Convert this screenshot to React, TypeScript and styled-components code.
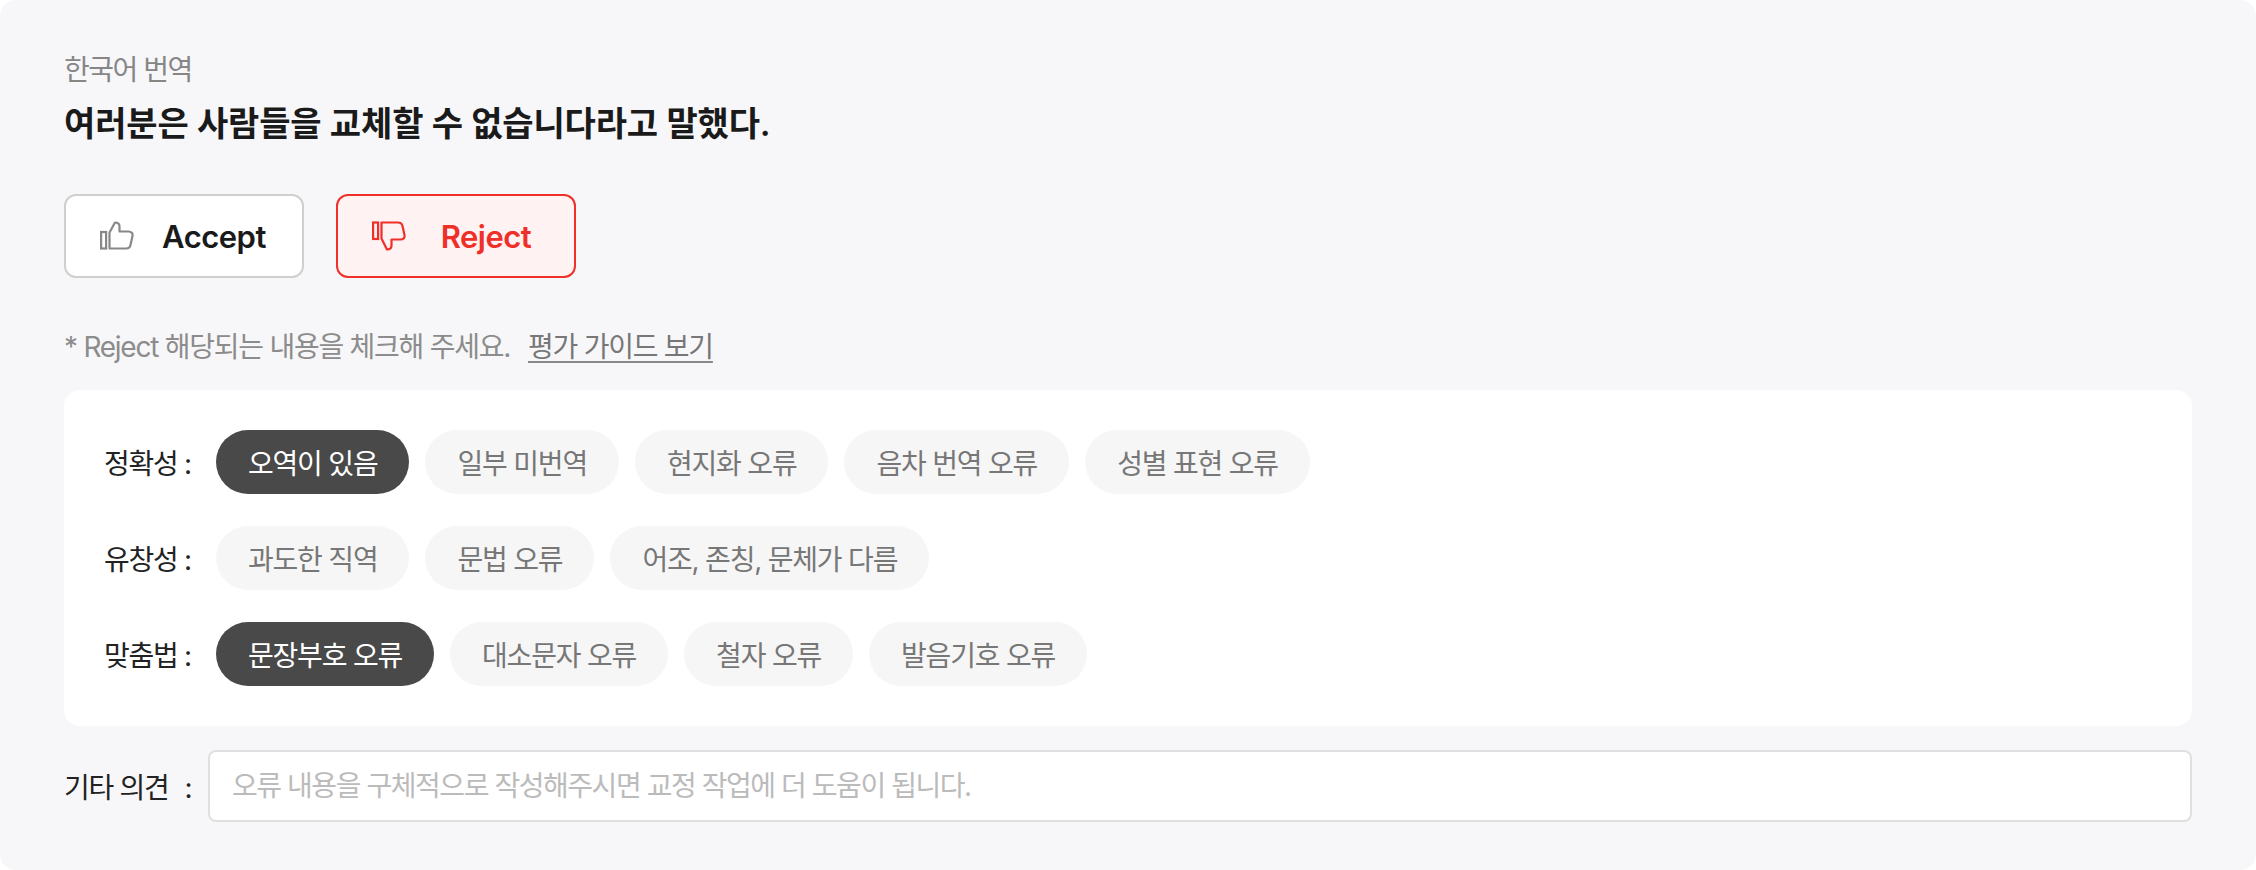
import React from 'react'
import styled, { createGlobalStyle } from 'styled-components'

const GlobalStyle = createGlobalStyle`
  * { box-sizing: border-box; }
  html, body { margin: 0; padding: 0; background: #fff; }
  body { font-family: Inter, "Noto Sans CJK KR", sans-serif; }
`

const groups = [
  {
    label: '정확성 :',
    items: [
      { text: '오역이 있음', active: true },
      { text: '일부 미번역' },
      { text: '현지화 오류' },
      { text: '음차 번역 오류' },
      { text: '성별 표현 오류' },
    ],
  },
  {
    label: '유창성 :',
    items: [
      { text: '과도한 직역' },
      { text: '문법 오류' },
      { text: '어조, 존칭, 문체가 다름' },
    ],
  },
  {
    label: '맞춤법 :',
    items: [
      { text: '문장부호 오류', active: true },
      { text: '대소문자 오류' },
      { text: '철자 오류' },
      { text: '발음기호 오류' },
    ],
  },
]

const ThumbUp = () => (
  <svg width="34" height="30" viewBox="0 0 34 30" fill="none" stroke="currentColor" strokeWidth="2.2">
    <rect x="1.100" y="11" width="5" height="16.500" />
    <path d="M9.500 27.500V11.500L15 1.500C18 1.500 19.500 3 19.500 5.500V10.500H28.500C31.500 10.500 33 12.500 32.500 15L30.500 24C30 26.500 28.500 27.500 26 27.500H9.500Z" strokeLinejoin="round" />
  </svg>
)

const ThumbDown = () => (
  <svg width="34" height="30" viewBox="0 0 34 30" fill="none" stroke="currentColor" strokeWidth="2.2">
    <rect x="1.100" y="1.500" width="5" height="16.500" />
    <path d="M9.500 1.500V17.500L15 28.500C18 28.500 19.500 27 19.500 24.500V18.500H28.500C31.500 18.500 33 16.500 32.500 14L30.500 5C30 2.500 28.500 1.500 26 1.500H9.500Z" strokeLinejoin="round" />
  </svg>
)

export default function App() {
  return (
    <>
      <GlobalStyle />
      <Panel>
        <Caption>한국어 번역</Caption>
        <Sentence>여러분은 사람들을 교체할 수 없습니다라고 말했다.</Sentence>
        <Actions>
          <ActionButton>
            <IconSlot><ThumbUp /></IconSlot>
            <ActionText>Accept</ActionText>
          </ActionButton>
          <ActionButton reject>
            <IconSlot reject><ThumbDown /></IconSlot>
            <ActionText>Reject</ActionText>
          </ActionButton>
        </Actions>
        <Hint>
          * Reject 해당되는 내용을 체크해 주세요.
          <GuideLink href="#">평가 가이드 보기</GuideLink>
        </Hint>
        <Card>
          {groups.map((group) => (
            <Row key={group.label}>
              <RowLabel>{group.label}</RowLabel>
              {group.items.map((item) => (
                <Pill key={item.text} active={item.active}>{item.text}</Pill>
              ))}
            </Row>
          ))}
        </Card>
        <OpinionRow>
          <OpinionLabel>기타 의견<Colon>:</Colon></OpinionLabel>
          <OpinionInput placeholder="오류 내용을 구체적으로 작성해주시면 교정 작업에 더 도움이 됩니다." />
        </OpinionRow>
      </Panel>
    </>
  )
}

const Panel = styled.div`
  height: 870px;
  padding: 48px 64px;
  background: #f7f7f9;
  border-radius: 16px;
`

const Caption = styled.div`
  height: 40px;
  margin-top: 2px;
  line-height: 40px;
  font-size: 28px;
  letter-spacing: -1.5px;
  color: #868686;
`

const Sentence = styled.div`
  margin-top: 10px;
  height: 48px;
  line-height: 48px;
  font-size: 34px;
  font-weight: 600;
  letter-spacing: -0.15px;
  color: #1a1a1a;
`

const Actions = styled.div`
  display: flex;
  gap: 32px;
  margin-top: 46px;
`

const ActionButton = styled.button<{ reject?: boolean }>`
  display: flex;
  align-items: center;
  width: 240px;
  height: 84px;
  padding: 0 8px 0 34px;
  border-radius: 12px;
  border: 2px solid ${(p) => (p.reject ? '#ee3029' : '#cfcfcf')};
  background: ${(p) => (p.reject ? '#fff2f2' : '#fff')};
  color: ${(p) => (p.reject ? '#ee3029' : '#1a1a1a')};
  font-family: inherit;
  font-size: 31px;
  font-weight: 600;
  letter-spacing: -0.5px;
`

const IconSlot = styled.span<{ reject?: boolean }>`
  display: flex;
  flex: none;
  width: 34px;
  color: ${(p) => (p.reject ? '#ee3029' : '#888')};
`

const ActionText = styled.span`
  flex: 1;
  text-align: center;
`

const Hint = styled.div`
  margin-top: 50px;
  height: 38px;
  line-height: 38px;
  font-size: 28px;
  letter-spacing: -1.25px;
  color: #8c8c8c;
`

const GuideLink = styled.a`
  margin-left: 18px;
  color: #777;
  text-decoration: underline;
  text-decoration-thickness: 2px;
  text-underline-offset: 4px;
  text-decoration-color: #888;
`

const Card = styled.div`
  display: flex;
  flex-direction: column;
  gap: 32px;
  margin-top: 24px;
  padding: 40px;
  background: #fff;
  border-radius: 16px;
`

const Row = styled.div`
  display: flex;
  align-items: center;
  gap: 16px;
`

const RowLabel = styled.div`
  width: 96px;
  font-size: 28px;
  letter-spacing: -1.3px;
  color: #222;
`

const Pill = styled.div<{ active?: boolean }>`
  height: 64px;
  padding: 0 32px;
  display: flex;
  align-items: center;
  border-radius: 32px;
  font-size: 28px;
  letter-spacing: -1.2px;
  background: ${(p) => (p.active ? '#494949' : '#f6f6f6')};
  color: ${(p) => (p.active ? '#fff' : '#777')};
`

const OpinionRow = styled.div`
  display: flex;
  align-items: center;
  margin-top: 24px;
`

const OpinionLabel = styled.label`
  width: 144px;
  flex: none;
  font-size: 28px;
  letter-spacing: -1.3px;
  color: #222;
`

const Colon = styled.span`
  margin-left: 16px;
`

const OpinionInput = styled.input`
  flex: 1;
  height: 72px;
  padding: 0 22px;
  border: 2px solid #e0e0e0;
  border-radius: 8px;
  background: #fff;
  font-family: inherit;
  font-size: 28px;
  letter-spacing: -1.45px;
  outline: none;
  &::placeholder { color: #bbb; }
`
